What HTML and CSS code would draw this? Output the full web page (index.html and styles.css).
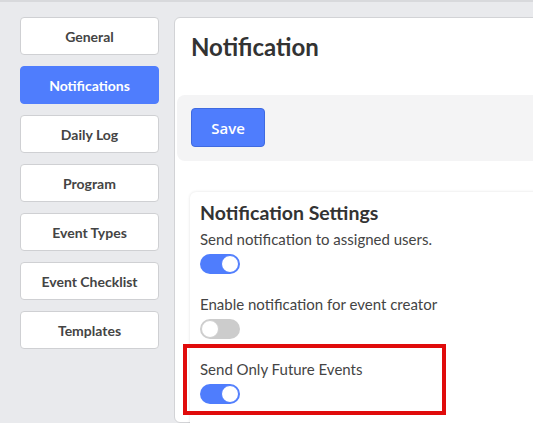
FILE: index.html
```html
<!DOCTYPE html>
<html>
<head>
<meta charset="utf-8">
<link rel="stylesheet" href="styles.css">
</head>
<body>
<div class="layout">
  <nav class="sidebar">
    <a class="nav-btn">General</a>
    <a class="nav-btn active">Notifications</a>
    <a class="nav-btn">Daily Log</a>
    <a class="nav-btn">Program</a>
    <a class="nav-btn">Event Types</a>
    <a class="nav-btn">Event Checklist</a>
    <a class="nav-btn">Templates</a>
  </nav>
  <main class="panel">
    <h1 class="page-title">Notification</h1>
    <div class="toolbar">
      <button class="save-btn">Save</button>
    </div>
    <section class="card">
      <h2 class="card-title">Notification Settings</h2>
      <div class="setting">
        <div class="setting-label">Send notification to assigned users.</div>
        <span class="toggle on"><span class="knob"></span></span>
      </div>
      <div class="setting">
        <div class="setting-label">Enable notification for event creator</div>
        <span class="toggle"><span class="knob"></span></span>
      </div>
      <div class="setting highlighted">
        <div class="setting-label">Send Only Future Events</div>
        <span class="toggle on"><span class="knob"></span></span>
        <div class="highlight-box"></div>
      </div>
    </section>
  </main>
</div>
</body>
</html>
```
FILE: styles.css
```css
* { box-sizing: border-box; }
html, body { margin: 0; padding: 0; }
body {
  background: #e9eaed;
  border-top: 2px solid #d8d9dc;
  height: 423px;
  overflow: hidden;
  font-family: "Lato", "Liberation Sans", sans-serif;
  color: #444;
}
.layout {
  display: flex;
  gap: 15px;
  padding: 15px 0 0 20px;
  height: 100%;
}
.sidebar {
  width: 139px;
  flex: none;
  display: flex;
  flex-direction: column;
  gap: 11px;
}
.nav-btn {
  display: flex;
  align-items: center;
  justify-content: center;
  height: 38px;
  background: #fff;
  border: 1px solid #cfd0d3;
  border-radius: 4px;
  font-weight: 700;
  font-size: 14px;
  color: #444;
}
.nav-btn.active {
  background: #4f7dfd;
  border-color: #4f7dfd;
  color: #fff;
}
.panel {
  flex: 1;
  margin-right: -40px;
  background: #fff;
  border: 1px solid #d2d3d6;
  border-radius: 6px;
  padding: 14px 0 0 2px;
}
.page-title {
  margin: 0 0 34px 14px;
  font-family: "Lato", "Liberation Sans", sans-serif;
  font-size: 24px;
  line-height: 29px;
  font-weight: 700;
  color: #333;
}
.toolbar {
  background: #f4f4f5;
  border-radius: 8px 0 0 8px;
  height: 66px;
  padding: 13px 14px;
}
.save-btn {
  width: 74px;
  height: 39px;
  background: #4f7dfd;
  border: 1px solid #3f6ae0;
  border-radius: 4px;
  color: #fff;
  font-family: "Open Sans", "Liberation Sans", sans-serif;
  font-weight: 600;
  font-size: 15px;
  padding: 0;
}
.card {
  margin: 31px 0 0 13px;
  background: #fff;
  border-radius: 6px;
  box-shadow: 0 0 3px rgba(0,0,0,0.12);
  padding: 9px 10px 40px;
}
.card-title {
  margin: 0 0 6px;
  font-size: 19.5px;
  font-weight: 700;
  line-height: 23px;
  color: #333;
}
.setting {
  display: flex;
  flex-direction: column;
  align-items: flex-start;
  gap: 6px;
  margin-bottom: 21px;
  position: relative;
}
.setting-label {
  font-size: 15px;
  line-height: 18px;
  color: #444;
}
.toggle {
  width: 40px;
  height: 20px;
  border-radius: 10px;
  background: #ccc;
  display: flex;
  align-items: center;
  padding: 0 1px;
}
.toggle .knob {
  width: 18px;
  height: 18px;
  border-radius: 50%;
  background: #fff;
  border: 1px solid #cfcfcf;
}
.toggle.on {
  background: #4f7dfd;
  justify-content: flex-end;
}
.toggle.on .knob {
  border-color: #4f7dfd;
}
.highlight-box {
  position: absolute;
  left: -17px;
  top: -16px;
  width: 263px;
  height: 71px;
  border: 4px solid #e00b0b;
}
```
